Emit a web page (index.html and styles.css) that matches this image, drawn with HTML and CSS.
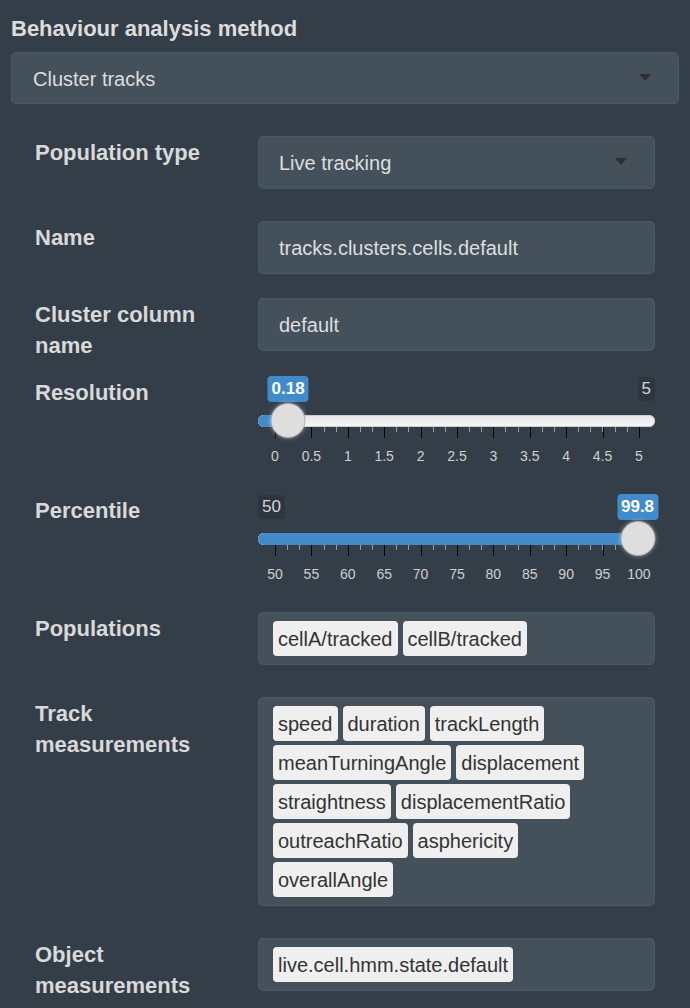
FILE: index.html
```html
<!DOCTYPE html>
<html>
<head>
<meta charset="utf-8">
<link rel="stylesheet" href="styles.css">
</head>
<body>
<div class="panel">
  <div class="title">Behaviour analysis method</div>
  <div class="field select top-select"><span>Cluster tracks</span><span class="caret"></span></div>

  <div class="form">
    <div class="row">
      <div class="label">Population type</div>
      <div class="field select"><span>Live tracking</span><span class="caret"></span></div>
    </div>

    <div class="row row-name">
      <div class="label">Name</div>
      <div class="field"><span>tracks.clusters.cells.default</span></div>
    </div>

    <div class="row row-cluster">
      <div class="label">Cluster column name</div>
      <div class="field"><span>default</span></div>
    </div>

    <div class="row">
      <div class="label">Resolution</div>
      <div class="slider" style="--v:0.036">
        <div class="badges">
          <span class="edge hidden">0</span>
          <span class="edge">5</span>
        </div>
        <span class="single">0.18</span>
        <div class="track"><div class="bar"></div></div>
        <span class="thumb"></span>
        <div class="scale">
          <div class="ticks minor"><i></i><i></i><i></i><i></i><i></i><i></i><i></i><i></i><i></i><i></i><i></i><i></i><i></i><i></i><i></i><i></i><i></i><i></i><i></i><i></i><i></i><i></i><i></i><i></i><i></i><i></i><i></i><i></i><i></i><i></i><i></i></div>
          <div class="ticks major"><i></i><i></i><i></i><i></i><i></i><i></i><i></i><i></i><i></i><i></i><i></i></div>
          <div class="nums"><span><b>0</b></span><span><b>0.5</b></span><span><b>1</b></span><span><b>1.5</b></span><span><b>2</b></span><span><b>2.5</b></span><span><b>3</b></span><span><b>3.5</b></span><span><b>4</b></span><span><b>4.5</b></span><span><b>5</b></span></div>
        </div>
      </div>
    </div>

    <div class="row">
      <div class="label">Percentile</div>
      <div class="slider" style="--v:0.996">
        <div class="badges">
          <span class="edge">50</span>
          <span class="edge hidden">100</span>
        </div>
        <span class="single">99.8</span>
        <div class="track"><div class="bar"></div></div>
        <span class="thumb"></span>
        <div class="scale">
          <div class="ticks minor"><i></i><i></i><i></i><i></i><i></i><i></i><i></i><i></i><i></i><i></i><i></i><i></i><i></i><i></i><i></i><i></i><i></i><i></i><i></i><i></i><i></i><i></i><i></i><i></i><i></i><i></i><i></i><i></i><i></i><i></i><i></i></div>
          <div class="ticks major"><i></i><i></i><i></i><i></i><i></i><i></i><i></i><i></i><i></i><i></i><i></i></div>
          <div class="nums"><span><b>50</b></span><span><b>55</b></span><span><b>60</b></span><span><b>65</b></span><span><b>70</b></span><span><b>75</b></span><span><b>80</b></span><span><b>85</b></span><span><b>90</b></span><span><b>95</b></span><span><b>100</b></span></div>
        </div>
      </div>
    </div>

    <div class="row">
      <div class="label">Populations</div>
      <div class="field chips">
        <span class="chip">cellA/tracked</span><span class="chip">cellB/tracked</span>
      </div>
    </div>

    <div class="row">
      <div class="label">Track measurements</div>
      <div class="field chips">
        <span class="chip">speed</span><span class="chip">duration</span><span class="chip">trackLength</span>
        <span class="chip">meanTurningAngle</span><span class="chip">displacement</span>
        <span class="chip">straightness</span><span class="chip">displacementRatio</span>
        <span class="chip">outreachRatio</span><span class="chip">asphericity</span>
        <span class="chip">overallAngle</span>
      </div>
    </div>

    <div class="row">
      <div class="label">Object measurements</div>
      <div class="field chips">
        <span class="chip">live.cell.hmm.state.default</span>
      </div>
    </div>
  </div>
</div>
</body>
</html>
```

FILE: styles.css
```css
* { box-sizing: border-box; }

html, body {
  margin: 0;
  background: #343e48;
}

body {
  font-family: "Liberation Sans", Arial, sans-serif;
  color: #d9d9d9;
  height: 1008px;
  overflow: hidden;
}

.panel {
  padding: 16px 11px 0 11px;
}

.title {
  font-size: 22px;
  font-weight: bold;
  line-height: 26px;
  color: #dcdcdc;
  margin-bottom: 10px;
}

.field {
  background: #44515b;
  border: 1px solid #4b5864;
  border-radius: 5px;
  height: 53px;
  font-size: 20px;
  line-height: 53px;
  color: #dedede;
  padding: 0 20px;
}

.select {
  display: flex;
  align-items: center;
  justify-content: space-between;
  padding-right: 27px;
}

.select span:first-child {
  margin-top: 2px;
}

.top-select {
  height: 52px;
  padding-left: 21px;
}

.caret {
  width: 0;
  height: 0;
  border-left: 6.5px solid transparent;
  border-right: 6.5px solid transparent;
  border-top: 7px solid #2f2f2f;
  margin-top: -2px;
}

.form {
  margin-top: 32px;
  padding-left: 24px;
}

.row {
  display: grid;
  grid-template-columns: 223px 397px;
  align-items: start;
  margin-bottom: 32px;
}

.row-name { margin-bottom: 24px; }
.row-cluster { margin-bottom: 15px; }

.label {
  font-size: 22px;
  font-weight: bold;
  line-height: 31px;
  color: #d9d9d9;
  padding-top: 1px;
  padding-right: 20px;
}

/* chips */
.chips {
  height: auto;
  display: flex;
  flex-wrap: wrap;
  align-content: flex-start;
  gap: 4px 5px;
  padding: 8px 14px;
  line-height: 25px;
}

.chip {
  background: #efefef;
  color: #333;
  border-radius: 4px;
  padding: 6px 5px 4px;
  font-size: 20px;
  line-height: 25px;
}

/* slider */
.slider {
  position: relative;
  height: 86px;
}

.badges {
  display: flex;
  justify-content: space-between;
  align-items: center;
  height: 26px;
}

.edge {
  background: rgba(0, 0, 0, 0.12);
  color: #d4d4d4;
  font-size: 17px;
  line-height: 22px;
  padding: 1px 4px;
  border-radius: 3px;
}

.hidden { visibility: hidden; }

.single {
  position: absolute;
  top: 0;
  left: calc(17px + (100% - 33px) * var(--v));
  transform: translateX(-50%);
  background: #428bca;
  color: #fff;
  font-size: 17px;
  font-weight: bold;
  line-height: 24px;
  padding: 1px 4px;
  border-radius: 4px;
  white-space: nowrap;
}

.track {
  margin-top: 13px;
  height: 12px;
  border-radius: 6px;
  overflow: hidden;
  background: linear-gradient(to bottom, #dedede -50%, #ffffff 150%);
  box-shadow: inset 0 0 0 1px #cccccc;
}

.bar {
  height: 100%;
  width: calc(17px + (100% - 33px) * var(--v));
  background: #428bca;
}

.thumb {
  position: absolute;
  top: 27px;
  left: calc(17px + (100% - 33px) * var(--v));
  transform: translateX(-50%);
  width: 35px;
  height: 35px;
  border-radius: 50%;
  background: #dedede;
  border: 1px solid #ababab;
  box-shadow: 0 0 4px rgba(255, 255, 255, 0.45);
}

.scale {
  display: grid;
  margin: 0 15px 0 17px;
}

.scale > * { grid-area: 1 / 1; }

.ticks {
  display: flex;
  justify-content: space-between;
  align-items: flex-start;
}

.ticks i {
  display: block;
  width: 1px;
}

.major i {
  height: 11px;
  background: #000;
}

.minor i {
  height: 5px;
  background: #9a9a9a;
}

.nums {
  display: flex;
  justify-content: space-between;
  margin-top: 20px;
  margin-right: 1px;
}

.nums span {
  width: 0;
  display: flex;
  justify-content: center;
}

.nums b {
  font-weight: normal;
  font-size: 14px;
  line-height: 18px;
  color: #cfcfcf;
  white-space: nowrap;
}
```
